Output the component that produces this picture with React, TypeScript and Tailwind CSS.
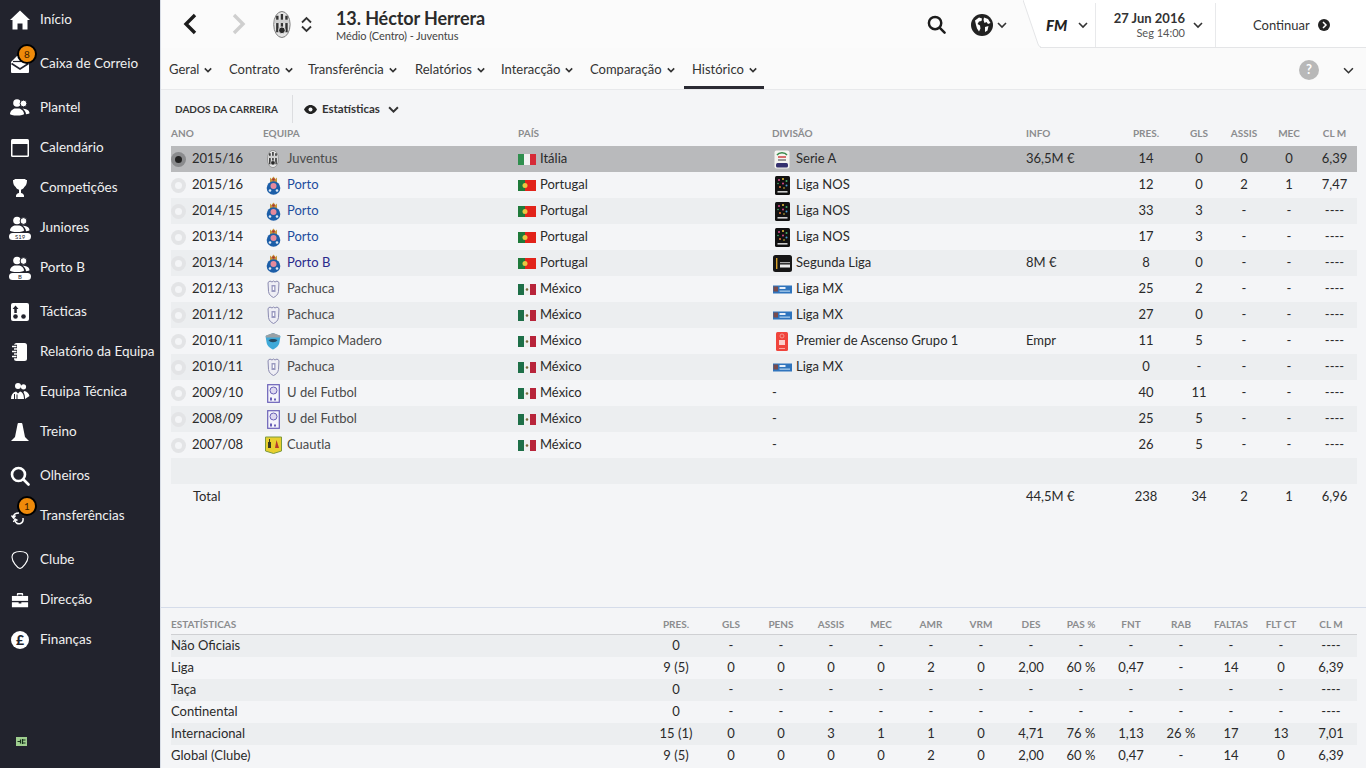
import type { ReactNode } from 'react';

const font = { fontFamily: 'Lato, "Open Sans", sans-serif' };

function People({ label }: { label?: string }) {
  return (
    <svg width="24" height="24" viewBox="0 0 24 24" fill="#fff">
      <circle cx="9" cy={label !== undefined ? 4.500 : 7} r="3.800" />
      <circle cx="15.500" cy={label !== undefined ? 5 : 7.500} r="3.400" stroke="#22232d" strokeWidth="1" />
      {label !== undefined ? (
        <>
          <path d="M2 14.500c0-3 3-4.500 4.500-5h5c1.500.5 4.500 2 4.500 5 0 .8-3 1.500-7 1.500s-7-.700-7-1.500z" />
          <path d="M14.500 9.500c3 .3 7 1.500 7 4.500 0 .7-1.200 1.100-3.500 1.300 0-2-1.500-4.300-3.500-5.800z" />
          <rect x="1" y="17" width="22" height="7" rx="3.500" />
          <text x="12" y="22.800" textAnchor="middle" fontSize="6" fill="#22232d" fontFamily="Lato, sans-serif">{label}</text>
        </>
      ) : (
        <>
          <path d="M2 18c0-3 3-5 4.500-5.500h5c1.500.5 4.500 2.500 4.500 5.500 0 .8-3 1.500-7 1.500s-7-.700-7-1.500z" />
          <path d="M14.500 12.500c3 .3 7 1.500 7 4.500 0 .7-1.200 1.100-3.500 1.300 0-2-1.500-4.300-3.500-5.800z" />
        </>
      )}
    </svg>
  );
}

const navIcons: Record<string, ReactNode> = {
  home: (
    <svg width="20" height="20" viewBox="0 0 20 20" fill="#fff"><path d="M10 .5 20 10h-2.500v9.500h-5v-6h-5v6h-5V10H0z" /></svg>
  ),
  mail: (
    <svg width="20" height="20" viewBox="0 0 20 20" fill="#fff"><path d="M1 8 7 2h6l6 6v10a1 1 0 0 1-1 1H2a1 1 0 0 1-1-1z" /><path d="M3 7.500h14" stroke="#22232d" strokeWidth="1.200" /><path d="M1.500 9.500 10 15l8.500-5.500" fill="none" stroke="#22232d" strokeWidth="1.600" /></svg>
  ),
  people: <People />,
  junior: <People label="S19" />,
  reserve: <People label="B" />,
  calendar: (
    <svg width="20" height="20" viewBox="0 0 20 20"><rect x="1" y="1" width="18" height="18" rx="1.500" fill="#fff" /><rect x="2.500" y="6" width="15" height="11.500" fill="#22232d" /></svg>
  ),
  trophy: (
    <svg width="20" height="20" viewBox="0 0 20 20" fill="#fff"><path d="M4.500 1h11v1h1.500c0 3.500-.7 5.500-2.700 7-.6 1.300-1.800 2.300-3.300 2.700V15c1.400.2 2.500 1 3 2.500V19H6v-1.500c.5-1.500 1.600-2.300 3-2.500v-3.300C7.500 11.300 6.300 10.300 5.700 9 3.700 7.500 3 5.500 3 2h1.500z" /></svg>
  ),
  tactics: (
    <svg width="20" height="20" viewBox="0 0 20 20"><rect x="1" y="1" width="18" height="18" rx="2" fill="#fff" /><path d="M5.500 3.500 8.500 7H6.800v4H4.300V7H2.600z" fill="#22232d" /><circle cx="5.500" cy="14.500" r="2.300" fill="#22232d" /><circle cx="13.500" cy="14.500" r="2.300" fill="#22232d" /></svg>
  ),
  report: (
    <svg width="20" height="20" viewBox="0 0 20 20"><rect x="4" y="1" width="13" height="18" rx="2.500" fill="#fff" /><path d="M2 4.500h5M2 9.500h5M2 14.500h5" stroke="#22232d" strokeWidth="3.400" /><path d="M2 4.500h4.500M2 9.500h4.500M2 14.500h4.500" stroke="#fff" strokeWidth="1.500" /></svg>
  ),
  staff: (
    <svg width="20" height="20" viewBox="0 0 20 20" fill="#fff"><circle cx="8" cy="4" r="3" /><circle cx="13.500" cy="4.800" r="2.600" /><path d="M1 17c0-4 1.500-6.500 5-7.500l2 2 2-2c2.500.7 4 3 4 7.500z" /><path d="M14 9c3 .3 5 2.500 5.500 5l-4.500 3c0-3-.3-5-1.500-6.500z" /><path d="M4.500 12v5M7 12.500V17" stroke="#22232d" strokeWidth="1" /></svg>
  ),
  cone: (
    <svg width="20" height="20" viewBox="0 0 20 20" fill="#fff"><path d="M8.500 1h3c.5 0 .8.300.9 1L15 15l4 4H1l4-4L7.600 2c.1-.7.400-1 .9-1z" /></svg>
  ),
  search: (
    <svg width="20" height="20" viewBox="0 0 20 20" fill="none" stroke="#fff" strokeWidth="2.600"><circle cx="8.500" cy="8.500" r="6.500" /><path d="m13.500 13.500 5 5" strokeLinecap="round" /></svg>
  ),
  transfer: (
    <svg width="20" height="20" viewBox="0 0 20 20" fill="none" stroke="#fff" strokeWidth="1.500"><path d="M9 7C5 7 3.500 9 3.500 11" /><path d="M1.500 9.500 3.500 12l2-2.500" /><path d="M5 14c0 3 3 4.500 5.500 3.500 2-.8 3-2.500 2.500-5.500" /><path d="M3.500 16 5 13l2.500 1.500" /></svg>
  ),
  club: (
    <svg width="20" height="20" viewBox="0 0 20 20" fill="none" stroke="#fff" strokeWidth="1.100"><path d="M10 1.500c4.500 0 8 1.800 8 5.500 0 4.500-5 10.500-8 11.500C7 17.500 2 11.500 2 7c0-3.700 3.500-5.500 8-5.500z" /></svg>
  ),
  case: (
    <svg width="18" height="18" viewBox="0 0 20 20" fill="#fff"><path d="M6.500 5V3.500c0-.8.500-1.300 1.300-1.300h4.400c.8 0 1.300.5 1.300 1.300V5h-1.500V3.800h-4V5z" /><path d="M1 5.500h18V11H1z" /><path d="M1 12.500h7.500V14h3v-1.500H19V18H1z" /></svg>
  ),
  pound: (
    <svg width="20" height="20" viewBox="0 0 20 20"><circle cx="10" cy="10" r="9" fill="#fff" /><text x="10" y="15" textAnchor="middle" fontSize="14" fontWeight="900" fill="#22232d" fontFamily="Lato, sans-serif">£</text></svg>
  ),
};

const navGroups: { icon: string; label: string; badge?: string }[][] = [
  [{ icon: 'home', label: 'Início' }],
  [{ icon: 'mail', label: 'Caixa de Correio', badge: '8' }],
  [
    { icon: 'people', label: 'Plantel' },
    { icon: 'calendar', label: 'Calendário' },
    { icon: 'trophy', label: 'Competições' },
    { icon: 'junior', label: 'Juniores' },
    { icon: 'reserve', label: 'Porto B' },
  ],
  [
    { icon: 'tactics', label: 'Tácticas' },
    { icon: 'report', label: 'Relatório da Equipa' },
    { icon: 'staff', label: 'Equipa Técnica' },
    { icon: 'cone', label: 'Treino' },
  ],
  [
    { icon: 'search', label: 'Olheiros' },
    { icon: 'transfer', label: 'Transferências', badge: '1' },
  ],
  [
    { icon: 'club', label: 'Clube' },
    { icon: 'case', label: 'Direcção' },
    { icon: 'pound', label: 'Finanças' },
  ],
];

function Chevron({ size = 9, width = 1.6, color = '#333' }: { size?: number; width?: number; color?: string }) {
  return (
    <svg width={size} height={size} viewBox="0 0 10 10" fill="none" stroke={color} strokeWidth={width * (10 / size)}>
      <path d="M1 3l4 4 4-4" />
    </svg>
  );
}

function Juve({ size = 16 }: { size?: number }) {
  return (
    <svg width={size * 0.66} height={size} viewBox="0 0 18 28">
      <ellipse cx="9" cy="14" rx="8.500" ry="13.500" fill="#e4e4e4" stroke="#777" />
      <path d="M3 5h2.500v17H3zM7.800 3h2.400v20H7.800zM12.500 5H15v17h-2.500z" fill="#333" />
      <rect x="1.500" y="9" width="15" height="3.500" fill="#cfcfcf" />
      <circle cx="9" cy="20" r="3.500" fill="#2a2a2a" stroke="#e4e4e4" />
    </svg>
  );
}

function Porto() {
  return (
    <svg width="15" height="19" viewBox="0 0 15 19">
      <path d="M4 1.500 5.500 3 7.500.5 9.500 3 11 1.500V7H4z" fill="#c9973c" />
      <circle cx="7.500" cy="3.500" r="1.300" fill="#a33" />
      <circle cx="7.500" cy="12" r="6.800" fill="#1c5ea8" />
      <circle cx="7.500" cy="10" r="3" fill="#e58a9c" />
      <circle cx="4" cy="14.500" r="1.300" fill="#dfe9f5" />
      <circle cx="11" cy="14.500" r="1.300" fill="#dfe9f5" />
    </svg>
  );
}

function Pachuca() {
  return (
    <svg width="13" height="18" viewBox="0 0 13 18">
      <path d="M1 2.500 3 1l2 1 1.500-1L8 2l2-1 2 1.500-.5 9C11 15 8.500 16.500 6.500 17.500 4.500 16.500 2 15 1.500 11.500z" fill="#eeeef5" stroke="#8a8ab0" strokeWidth="1" />
      <rect x="4.500" y="5" width="4" height="7" fill="#9a9ac0" />
      <rect x="5.800" y="6.500" width="1.400" height="3.500" fill="#fff" />
    </svg>
  );
}

function Tampico() {
  return (
    <svg width="16" height="18" viewBox="0 0 16 18">
      <path d="M.5 4 8 1l7.500 3-1 6C14 14 11 16 8 17.500 5 16 2 14 1.500 10z" fill="#3fa9d8" />
      <path d="M1 3.500 8 1l7 2.500v2H1z" fill="#9aa0a4" />
      <path d="M3.500 8c2-1.500 7-1.500 9 0-1.500 3-7.500 3-9 0z" fill="#274b63" />
    </svg>
  );
}

function UdelFutbol() {
  return (
    <svg width="13" height="19" viewBox="0 0 13 19">
      <rect x=".7" y=".7" width="11.600" height="17.600" fill="#f5f5fb" stroke="#6a60b8" strokeWidth="1.200" />
      <circle cx="6.500" cy="6.500" r="3.500" fill="#ddd8f0" stroke="#6a60b8" />
      <rect x="3" y="13.500" width="2" height="3" fill="#6a60b8" />
      <rect x="7" y="14.500" width="2" height="2" fill="#6a60b8" />
    </svg>
  );
}

function Cuautla() {
  return (
    <svg width="17" height="18" viewBox="0 0 17 18">
      <path d="M.5 1h16v14l-8 2.500-8-2.500z" fill="#e8cf2e" stroke="#7c9a3c" />
      <path d="M3 6h3v6H3zM4 3h1v3H4z" fill="#3a3a20" />
      <path d="M10 12l1.500-8L14 12z" fill="#b5392c" />
    </svg>
  );
}

function SerieA() {
  return (
    <svg width="16" height="19" viewBox="0 0 16 19">
      <rect x=".5" y=".5" width="15" height="18" rx="2" fill="#f4f4f0" />
      <path d="M3 5c2-3 8-3 10 0" fill="none" stroke="#3a8a4a" strokeWidth="1.400" />
      <path d="M4 7h8" stroke="#c33" strokeWidth="1.400" />
      <rect x="4" y="9" width="8" height="2" fill="#999" />
      <rect x="2" y="13" width="12" height="4.500" rx="1.500" fill="#34306f" />
    </svg>
  );
}

function LigaNos() {
  return (
    <svg width="15" height="19" viewBox="0 0 15 19">
      <rect width="15" height="19" rx="1.500" fill="#111" />
      <circle cx="4" cy="4" r="1" fill="#d64a8c" />
      <circle cx="8" cy="3" r="1" fill="#e7c33a" />
      <circle cx="11.500" cy="5" r="1" fill="#46b06a" />
      <circle cx="11.500" cy="9.500" r="1" fill="#4a9fd6" />
      <circle cx="5" cy="11" r="1" fill="#e0743a" />
      <circle cx="8" cy="7.500" r="1" fill="#d64a8c" />
      <circle cx="3" cy="7.500" r=".8" fill="#46b06a" />
      <circle cx="9" cy="12" r=".8" fill="#e7c33a" />
      <rect x="2.500" y="15" width="10" height="1.600" fill="#ccc" />
    </svg>
  );
}

function SegundaLiga() {
  return (
    <svg width="19" height="17" viewBox="0 0 19 17">
      <rect width="19" height="17" rx="2.500" fill="#161616" />
      <rect x="3" y="3" width="1.400" height="11" fill="#d9a22c" />
      <rect x="7" y="7" width="10" height="1.200" fill="#aaa" />
      <rect x="7" y="9.500" width="10" height="3" fill="#eee" />
    </svg>
  );
}

function LigaMx() {
  return (
    <svg width="19" height="9" viewBox="0 0 19 9">
      <rect y=".5" width="19" height="8" fill="#2f74bd" />
      <rect x=".5" y="1.500" width="4.500" height="5" fill="#7b4c4c" />
      <rect x="6.500" y="2" width="6" height="2" fill="#e8f0fa" />
      <rect x="6.500" y="5.500" width="10.500" height="1.300" fill="#a8cbeb" />
    </svg>
  );
}

function PremierLiga() {
  return (
    <svg width="12" height="19" viewBox="0 0 12 19">
      <rect width="12" height="19" rx="1.500" fill="#f0443c" />
      <circle cx="6" cy="4" r="2" fill="none" stroke="#f9a6a0" strokeWidth=".8" />
      <rect x="3" y="8" width="6" height="5" fill="#fbd0cc" />
      <rect x="3" y="16" width="6" height="1" fill="#f9a6a0" />
    </svg>
  );
}

function Flag({ code }: { code: 'it' | 'pt' | 'mx' }) {
  if (code === 'pt') {
    return (
      <svg width="18" height="11" viewBox="0 0 18 11">
        <rect width="18" height="11" fill="#e2231a" />
        <rect width="7" height="11" fill="#1f7a3a" />
        <circle cx="7" cy="5.500" r="2.500" fill="#e8c640" />
      </svg>
    );
  }
  const colors = code === 'it' ? ['#2f8f4e', '#f2f2f2', '#d62b37'] : ['#1e6f48', '#f0f0f0', '#b8243a'];
  return (
    <svg width="18" height="11" viewBox="0 0 18 11">
      <rect width="6" height="11" fill={colors[0]} />
      <rect x="6" width="6" height="11" fill={colors[1]} />
      <rect x="12" width="6" height="11" fill={colors[2]} />
      {code === 'mx' && <circle cx="9" cy="5.500" r="1.300" fill="#7a6a3a" />}
    </svg>
  );
}

const crests: Record<string, ReactNode> = {
  Juventus: <Juve size={18} />,
  Porto: <Porto />,
  'Porto B': <Porto />,
  Pachuca: <Pachuca />,
  'Tampico Madero': <Tampico />,
  'U del Futbol': <UdelFutbol />,
  Cuautla: <Cuautla />,
};

const leagues: Record<string, ReactNode> = {
  'Serie A': <SerieA />,
  'Liga NOS': <LigaNos />,
  'Segunda Liga': <SegundaLiga />,
  'Liga MX': <LigaMx />,
  'Premier de Ascenso Grupo 1': <PremierLiga />,
};

const teamColors: Record<string, string> = {
  Porto: 'text-[#1d4d9e]',
  'Porto B': 'text-[#2a2a8c]',
};

type Career = [string, string, 'it' | 'pt' | 'mx', string, string, string, string, string, string, string];

const countries = { it: 'Itália', pt: 'Portugal', mx: 'México' };

const career: Career[] = [
  ['2015/16', 'Juventus', 'it', 'Serie A', '36,5M €', '14', '0', '0', '0', '6,39'],
  ['2015/16', 'Porto', 'pt', 'Liga NOS', '', '12', '0', '2', '1', '7,47'],
  ['2014/15', 'Porto', 'pt', 'Liga NOS', '', '33', '3', '-', '-', '----'],
  ['2013/14', 'Porto', 'pt', 'Liga NOS', '', '17', '3', '-', '-', '----'],
  ['2013/14', 'Porto B', 'pt', 'Segunda Liga', '8M €', '8', '0', '-', '-', '----'],
  ['2012/13', 'Pachuca', 'mx', 'Liga MX', '', '25', '2', '-', '-', '----'],
  ['2011/12', 'Pachuca', 'mx', 'Liga MX', '', '27', '0', '-', '-', '----'],
  ['2010/11', 'Tampico Madero', 'mx', 'Premier de Ascenso Grupo 1', 'Empr', '11', '5', '-', '-', '----'],
  ['2010/11', 'Pachuca', 'mx', 'Liga MX', '', '0', '-', '-', '-', '----'],
  ['2009/10', 'U del Futbol', 'mx', '-', '', '40', '11', '-', '-', '----'],
  ['2008/09', 'U del Futbol', 'mx', '-', '', '25', '5', '-', '-', '----'],
  ['2007/08', 'Cuautla', 'mx', '-', '', '26', '5', '-', '-', '----'],
];

const careerGrid = 'grid grid-cols-[92px_255px_254px_254px_94px_52px_54px_36px_54px_37px] items-center';
const statsGrid = 'grid grid-cols-[479px_56px_repeat(13,50px)] items-center';

const statHeaders = ['PRES.', 'GLS', 'PENS', 'ASSIS', 'MEC', 'AMR', 'VRM', 'DES', 'PAS %', 'FNT', 'RAB', 'FALTAS', 'FLT CT', 'CL M'];

const stats: string[][] = [
  ['Não Oficiais', '0', '-', '-', '-', '-', '-', '-', '-', '-', '-', '-', '-', '-', '----'],
  ['Liga', '9 (5)', '0', '0', '0', '0', '2', '0', '2,00', '60 %', '0,47', '-', '14', '0', '6,39'],
  ['Taça', '0', '-', '-', '-', '-', '-', '-', '-', '-', '-', '-', '-', '-', '----'],
  ['Continental', '0', '-', '-', '-', '-', '-', '-', '-', '-', '-', '-', '-', '-', '----'],
  ['Internacional', '15 (1)', '0', '0', '3', '1', '1', '0', '4,71', '76 %', '1,13', '26 %', '17', '13', '7,01'],
  ['Global (Clube)', '9 (5)', '0', '0', '0', '0', '2', '0', '2,00', '60 %', '0,47', '-', '14', '0', '6,39'],
];

const tabs = [
  { label: 'Geral', w: 'w-[60px]' },
  { label: 'Contrato', w: 'w-[79px]' },
  { label: 'Transferência', w: 'w-[107px]' },
  { label: 'Relatórios', w: 'w-[86px]' },
  { label: 'Interacção', w: 'w-[89px]' },
  { label: 'Comparação', w: 'w-[102px]' },
  { label: 'Histórico', w: 'w-[80px]', active: true },
];

function Sidebar() {
  return (
    <aside className="relative flex w-[160px] shrink-0 flex-col gap-1 bg-[#22232d] text-[13.5px] text-[#f0f0f0]">
      {navGroups.map((group, i) => (
        <div key={i}>
          {group.map((item) => (
            <div key={item.label} className="relative flex h-10 items-center whitespace-nowrap">
              <span className="flex w-10 shrink-0 justify-center">{navIcons[item.icon]}</span>
              <span className="-mt-px">{item.label}</span>
              {item.badge && (
                <span className="absolute left-[17px] top-[0px] flex h-5 w-5 items-center justify-center rounded-full border-2 border-black bg-[#ef8a0a] text-[10px] text-[#3a2000]">
                  {item.badge}
                </span>
              )}
            </div>
          ))}
        </div>
      ))}
      <div className="absolute bottom-[22px] left-[16px]">
        <svg width="12" height="9" viewBox="0 0 12 9">
          <rect width="11" height="9" fill="#9fce8f" />
          <path d="M1.500 4.500h3M4.500 2.500v4M6.500 3h3M6.500 6h3M6.500 2v5" stroke="#14301a" strokeWidth="1.200" fill="none" />
        </svg>
      </div>
    </aside>
  );
}

function TopBar() {
  return (
    <div className="flex h-12 items-stretch bg-[#fbfbfb]">
      <div className="w-[4px] shrink-0" />
      <div className="flex w-[50px] items-center justify-center">
        <svg width="14" height="22" viewBox="0 0 14 22" fill="none" stroke="#1c1c1c" strokeWidth="3.400"><path d="M12 2 3 11l9 9" /></svg>
      </div>
      <div className="flex w-[48px] items-center justify-center">
        <svg width="14" height="22" viewBox="0 0 14 22" fill="none" stroke="#cfcfcf" strokeWidth="3.400"><path d="m2 2 9 9-9 9" /></svg>
      </div>
      <div className="ml-[5px] flex w-[28px] items-center justify-center"><Juve size={27} /></div>
      <div className="flex w-[20px] flex-col items-center justify-center gap-[1px]">
        <svg width="11" height="8" viewBox="0 0 11 8" fill="none" stroke="#333" strokeWidth="1.800"><path d="m1 6.500 4.500-4.500 4.500 4.500" /></svg>
        <svg width="11" height="8" viewBox="0 0 11 8" fill="none" stroke="#333" strokeWidth="1.800"><path d="m1 1.500 4.500 4.500 4.500-4.500" /></svg>
      </div>
      <div className="ml-[20px] flex w-[583px] flex-col pt-[7px]">
        <div className="text-[18px] font-bold leading-[22px] tracking-[-0.1px] text-[#2b2b2b]">13. Héctor Herrera</div>
        <div className="text-[11px] leading-[13px] tracking-[-0.08px] text-[#444]">Médio (Centro) - Juventus</div>
      </div>
      <div className="flex w-[34px] items-center justify-center">
        <svg width="19" height="19" viewBox="0 0 20 20" fill="none" stroke="#1c1c1c" strokeWidth="2.600"><circle cx="8.500" cy="8.500" r="6.500" /><path d="m13.500 13.500 5 5" strokeLinecap="round" /></svg>
      </div>
      <div className="ml-[18px] flex w-[69px] items-center gap-[4px] pt-[1px]">
        <svg width="22" height="22" viewBox="0 0 22 22">
          <circle cx="11" cy="11" r="11" fill="#222" />
          <path d="M4 6.500 8 3.500l3 1-.5 2.500L8 7.500 6.500 10l2.500 1.500.5 3-1.500 3-2-3-1-3.500zM13 3.500l4 1.500 2.500 4-2.500 1-1.500-2-2 1-1-3zM14 13l3.500-1-1 4.500-2.500 1.500z" fill="#fff" />
        </svg>
        <Chevron size={10} />
      </div>
      <div className="relative flex flex-1 items-stretch">
        {/* slanted edge of the white tab */}
        <svg className="absolute left-[-17px] top-0" width="18" height="48" viewBox="0 0 18 48">
          <path d="M0 0 15 44q1 3 3 3V0z" fill="#fff" />
          <path d="M0 0 15 44q1 3 3 3" fill="none" stroke="#e4e5e7" />
        </svg>
        <div className="flex flex-1 items-stretch border-b border-[#e4e5e7] bg-white pt-[3px]">
          <div className="flex w-[56px] items-center border-r border-[#e8e9eb] pl-[6px]">
            <span className="w-[22px] text-[15px] font-black italic leading-none text-[#222]">FM</span>
            <span className="ml-[10px]"><Chevron size={10} /></span>
          </div>
          <div className="flex w-[120px] items-center border-r border-[#e8e9eb]">
            <div className="ml-[18px] -mt-px flex w-[71px] flex-col items-end">
              <span className="whitespace-nowrap text-[13px] font-bold leading-[16px] text-[#333]">27 Jun 2016</span>
              <span className="whitespace-nowrap text-[11px] leading-[14px] text-[#555]">Seg 14:00</span>
            </div>
            <span className="ml-[8px]"><Chevron size={10} /></span>
          </div>
          <div className="flex flex-1 items-center pl-[37px]">
            <span className="pt-[2px] text-[13px] text-[#333]">Continuar</span>
            <svg className="ml-[8px]" width="12" height="12" viewBox="0 0 12 12"><circle cx="6" cy="6" r="6" fill="#222" /><path d="m5 3 3 3-3 3" fill="none" stroke="#fff" strokeWidth="1.500" /></svg>
          </div>
        </div>
      </div>
    </div>
  );
}

function TabBar() {
  return (
    <div className="flex h-[42px] items-stretch border-b border-[#e8e9eb] bg-[#fafafa] text-[13px] text-[#333]">
      {tabs.map((t) => (
        <div key={t.label} className={`flex ${t.w} items-center gap-[5px] whitespace-nowrap pl-2 ${t.active ? 'border-b-[3px] border-[#2b2b33] pt-[6px]' : 'pt-[3px]'}`}>
          {t.label}
          <Chevron size={8} />
        </div>
      ))}
      <div className="ml-auto flex items-center gap-[24px] pr-[12px] pt-[3px]">
        <span className="flex h-5 w-5 items-center justify-center rounded-full bg-[#b8b8b8] text-[13px] font-bold text-white">?</span>
        <Chevron size={11} />
      </div>
    </div>
  );
}

function Radio({ on }: { on: boolean }) {
  return (
    <span className={`flex h-[15px] w-[15px] items-center justify-center rounded-full ${on ? 'bg-[#8a8b8d]' : 'bg-[#e3e4e6]'}`}>
      <span className={`h-[7px] w-[7px] rounded-full ${on ? 'bg-[#222]' : 'bg-[#f4f5f7]'}`} />
    </span>
  );
}

function CareerTable() {
  return (
    <div className="ml-[10px] w-[1186px] text-[13px] text-[#2a2a2a]">
      <div className={`${careerGrid} h-[26px] text-[10px] font-bold text-[#8b8c8e]`}>
        <span>ANO</span>
        <span>EQUIPA</span>
        <span>PAÍS</span>
        <span>DIVISÃO</span>
        <span>INFO</span>
        <span className="text-center">PRES.</span>
        <span className="text-center">GLS</span>
        <span className="text-center">ASSIS</span>
        <span className="text-center">MEC</span>
        <span className="text-center">CL M</span>
      </div>
      {career.map((row, i) => (
        <div key={i} className={`${careerGrid} h-[26px] ${i === 0 ? 'bg-[#b9babc]' : i % 2 === 0 ? 'bg-[#eceef0]' : ''}`}>
          <div className="flex items-center">
            <Radio on={i === 0} />
            <span className="ml-[6px]">{row[0]}</span>
          </div>
          <div className="flex items-center">
            <span className="flex w-5 justify-center">{crests[row[1]]}</span>
            <span className={`ml-[4px] ${teamColors[row[1]] ?? 'text-[#4a4a4a]'}`}>{row[1]}</span>
          </div>
          <div className="flex items-center gap-1">
            <Flag code={row[2]} />
            <span>{countries[row[2]]}</span>
          </div>
          <div className="flex items-center">
            {leagues[row[3]] && <span className="mr-[4px] flex w-5 justify-center">{leagues[row[3]]}</span>}
            <span>{row[3]}</span>
          </div>
          <span>{row[4]}</span>
          <span className="text-center">{row[5]}</span>
          <span className="text-center">{row[6]}</span>
          <span className="text-center">{row[7]}</span>
          <span className="text-center">{row[8]}</span>
          <span className="text-center">{row[9]}</span>
        </div>
      ))}
      <div className="h-[26px] bg-[#eceef0]" />
      <div className={`${careerGrid} h-[26px]`}>
        <span className="col-span-4 pl-[22px]">Total</span>
        <span>44,5M €</span>
        <span className="text-center">238</span>
        <span className="text-center">34</span>
        <span className="text-center">2</span>
        <span className="text-center">1</span>
        <span className="text-center">6,96</span>
      </div>
    </div>
  );
}

function StatsTable() {
  return (
    <div className="h-[161px] border-t border-[#d5dcea] pl-[10px] text-[13px] text-[#2a2a2a]">
      <div className={`${statsGrid} h-[27px] w-[1186px] border-b border-[#cfd0d3] pt-[6px] text-[10px] font-bold text-[#8b8c8e]`}>
        <span>ESTATÍSTICAS</span>
        {statHeaders.map((h, i) => (
          <span key={h} className={`text-center ${i === 0 ? 'pr-1' : ''}`}>{h}</span>
        ))}
      </div>
      {stats.map((row, i) => (
        <div key={row[0]} className={`${statsGrid} h-[22px] w-[1186px] ${i % 2 === 0 ? 'bg-[#eceef0]' : ''}`}>
          {row.map((c, j) => (
            <span key={j} className={j === 0 ? '' : j === 1 ? 'pr-1 text-center' : 'text-center'}>{c}</span>
          ))}
        </div>
      ))}
    </div>
  );
}

export default function App() {
  return (
    <div className="flex h-[768px] w-[1366px] overflow-hidden" style={font}>
      <Sidebar />
      <main className="flex min-w-0 flex-1 flex-col border-l border-[#d8dde6] bg-[#f4f5f7]">
        <TopBar />
        <TabBar />
        <div className="flex h-[30px] items-center pl-[14px] pt-[8px]">
          <span className="w-[117px] whitespace-nowrap text-[10px] font-bold text-[#333]">DADOS DA CARREIRA</span>
          <span className="h-7 border-l border-[#dcdde0]" />
          <svg className="ml-[11px]" width="13" height="9" viewBox="0 0 13 9"><path d="M6.500 0C10 0 12 2.500 13 4.500 12 6.500 10 9 6.500 9S1 6.500 0 4.500C1 2.500 3 0 6.500 0z" fill="#222" /><circle cx="6.500" cy="4.500" r="2" fill="#f4f5f7" /></svg>
          <span className="ml-[5px] text-[11.5px] font-bold text-[#333]">Estatísticas</span>
          <span className="ml-2"><Chevron size={11} width={2} /></span>
        </div>
        <CareerTable />
        <div className="flex-1" />
        <StatsTable />
      </main>
    </div>
  );
}
